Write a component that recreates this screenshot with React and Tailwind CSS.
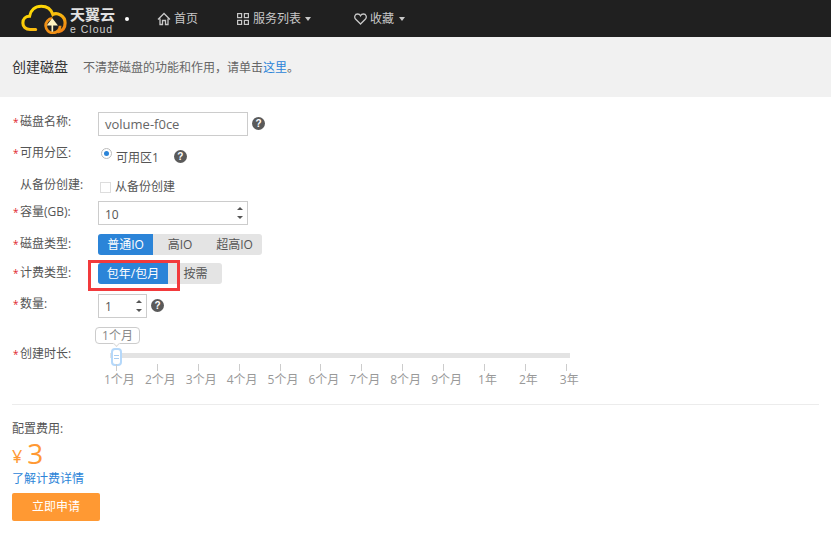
const FONT = '"Open Sans", "Noto Sans CJK SC", sans-serif';
const MONTHS = ['1个月', '2个月', '3个月', '4个月', '5个月', '6个月', '7个月', '8个月', '9个月', '1年', '2年', '3年'];

function Logo() {
    return (
        <div className="flex items-center w-[120px] ml-[21px]">
            <svg width="46" height="30" viewBox="0 0 41 27" fill="none">
                <defs>
                    <linearGradient id="cloud" x1="0" y1="0" x2="1" y2="1">
                        <stop offset="0" stopColor="#ffe600" />
                        <stop offset="0.6" stopColor="#f9b90f" />
                        <stop offset="1" stopColor="#ee7a14" />
                    </linearGradient>
                </defs>
                <path d="M13 23H8C4 23 1.500 20.500 1.500 17C1.500 13.500 4 11 7.500 11C8.500 5.500 12.500 2 18 2C23 2 27 5 28.500 9.500C30 8.500 33 8.500 35.500 10C38 11.500 39.500 14 39.500 17C39.500 21 37 24 33.500 25" stroke="url(#cloud)" strokeWidth="2.800" strokeLinecap="round" />
                <path d="M35 19.500A6.500 6.500 0 1 1 28 13" stroke="#f09016" strokeWidth="2.500" />
                <path d="M28 25V17.500M24.500 18.500L28 14L31.500 18.500Z" stroke="#fff3c0" strokeWidth="1.500" fill="#fff3c0" />
            </svg>
            <div className="ml-[3px] h-[30px] pt-[3px] flex flex-col text-[#e2e2e2]">
                <span className="text-[15px] font-bold leading-[15px]">天翼云</span>
                <span className="mt-[3px] text-[10.500px] leading-[8px] tracking-[1px] font-['Liberation_Sans'] text-[#cfcfcf]">e Cloud</span>
            </div>
            <span className="ml-[10px] w-1 h-1 rounded-full bg-white" />
        </div>
    );
}

function NavBar() {
    return (
        <div className="h-[37px] bg-[#202020] flex items-center text-xs text-[#c8c8c8]">
            <Logo />
            <div className="flex items-center ml-[16px] w-[80px]">
                <svg width="14" height="14" viewBox="0 0 14 14" fill="none" stroke="#c8c8c8" strokeWidth="1.300" className="mr-[3px]">
                    <path d="M1 7.500L7 1.500L13 7.500M3 6.500V12.500H5.500V8.500H8.500V12.500H11V6.500" />
                </svg>
                首页
            </div>
            <div className="flex items-center w-[117px]">
                <svg width="12" height="12" viewBox="0 0 12 12" fill="none" stroke="#c8c8c8" strokeWidth="1.200" className="mr-[4px]">
                    <rect x="0.600" y="0.600" width="4" height="4" />
                    <rect x="7.400" y="0.600" width="4" height="4" />
                    <rect x="0.600" y="7.400" width="4" height="4" />
                    <rect x="7.400" y="7.400" width="4" height="4" />
                </svg>
                服务列表
                <span className="ml-[4px] border-x-[3px] border-t-[4px] border-x-transparent border-t-[#c8c8c8]" />
            </div>
            <div className="flex items-center">
                <svg width="13" height="12" viewBox="0 0 13 12" fill="none" stroke="#c8c8c8" strokeWidth="1.300" className="mr-[3px]">
                    <path d="M6.500 11L1.500 6C0 4.300 0.700 1 3.600 1C5 1 6 1.800 6.500 2.800C7 1.800 8 1 9.400 1C12.300 1 13 4.300 11.500 6Z" />
                </svg>
                收藏
                <span className="ml-[5px] border-x-[3px] border-t-[4px] border-x-transparent border-t-[#c8c8c8]" />
            </div>
        </div>
    );
}

function Help({ className = '' }) {
    return (
        <span className={`inline-flex items-center justify-center w-[13px] h-[13px] rounded-full bg-[#5a5a5a] text-white text-[10px] font-bold leading-none font-['Liberation_Sans'] ${className}`}>?</span>
    );
}

function Spinner() {
    return (
        <span className="flex flex-col gap-[6px] items-center">
            <span className="border-x-[3px] border-b-[3px] border-x-transparent border-b-[#555]" />
            <span className="border-x-[3px] border-t-[3px] border-x-transparent border-t-[#555]" />
        </span>
    );
}

function Row({ label, required = true, height, top = 0, labelTop = 0, children }) {
    return (
        <div className="flex" style={{ height, marginTop: top }}>
            <div className="w-[86px] flex text-xs text-[#555] leading-[20px]" style={{ marginTop: labelTop }}>
                <span className="w-2 pl-[1px] text-[10px] text-[#e0242c]">{required ? '*' : ''}</span>
                {label}
            </div>
            <div className="flex-1 flex items-start">{children}</div>
        </div>
    );
}

function Segment({ items, active }) {
    return (
        <div className="flex h-[21px] rounded-[3px] bg-[#e4e4e4] text-xs text-[#555] leading-[21px]">
            {items.map((item) => (
                <span key={item.text} className={`${item.width} text-center ${item.text === active ? 'bg-[#2b84d8] text-white rounded-l-[3px]' : ''}`}>
                    {item.text}
                </span>
            ))}
        </div>
    );
}

function DurationSlider() {
    return (
        <div className="relative w-[490px] h-[60px]">
            <div className="absolute left-[-3px] top-0 h-[17px] w-[45px] rounded-[4px] border border-[#ccc] bg-white text-xs leading-[15px] text-[#888] text-center">
                1个月
                <span className="absolute left-[18px] bottom-[-3px] w-[5px] h-[5px] rotate-45 border-r border-b border-[#ddd] bg-white" />
            </div>
            <div className="absolute left-[12px] top-[26px] w-[460px] h-[5px] bg-[#e3e3e3]" />
            <div className="absolute left-[13px] top-[21px] w-[11px] h-[18px] rounded-[4px] border-2 border-[#b5d8fa] bg-white flex flex-col items-center justify-center gap-[2px]">
                <span className="w-[5px] h-px bg-[#a9cdf0]" />
                <span className="w-[5px] h-px bg-[#a9cdf0]" />
            </div>
            <div className="absolute left-[-2px] top-[37px] flex">
                {MONTHS.map((m) => (
                    <div key={m} className="w-[40.900px] flex flex-col items-center text-xs text-[#999] leading-[16px]">
                        <span className="w-px h-[7px] bg-[#ccc] mb-[1px]" />
                        <span className="whitespace-nowrap translate-x-[3px]">{m}</span>
                    </div>
                ))}
            </div>
        </div>
    );
}

export default function App() {
    return (
        <div className="w-[831px] h-[535px] bg-white overflow-hidden" style={{ fontFamily: FONT }}>
            <NavBar />
            <div className="h-[60px] bg-[#f1f1f1] flex items-center px-3 pb-[1px]">
                <span className="text-sm text-[#333] mr-[15px]">创建磁盘</span>
                <span className="text-xs text-[#666] mt-[2px]">
                    不清楚磁盘的功能和作用，请单击<span className="text-[#2b84d8]">这里</span>。
                </span>
            </div>
            <div className="px-3 pt-[15px]">
                <Row label="磁盘名称:" height={24}>
                    <div className="w-[150px] h-[24px] border border-[#ccc] px-[6px] text-[13px] leading-[22px] text-[#666]">volume-f0ce</div>
                    <Help className="ml-[4px] mt-[5px]" />
                </Row>
                <Row label="可用分区:" height={24} top={9} labelTop={-2}>
                    <span className="ml-[3px] mt-[3px] w-[11px] h-[11px] rounded-full border border-[#bbb] flex items-center justify-center">
                        <span className="w-[5px] h-[5px] rounded-full bg-[#2b84d8]" />
                    </span>
                    <span className="ml-[4px] mt-[3px] text-xs leading-[20px] text-[#555]">可用区1</span>
                    <Help className="ml-[15px] mt-[5px]" />
                </Row>
                <Row label="从备份创建:" required={false} height={24} top={6}>
                    <span className="ml-[2px] mt-[7px] w-[11px] h-[11px] border border-[#ddd]" />
                    <span className="ml-[4px] mt-[2px] text-xs leading-[20px] text-[#555]">从备份创建</span>
                </Row>
                <Row label="容量(GB):" height={24} top={2} labelTop={1}>
                    <div className="w-[150px] h-[24px] border border-[#ccc] pl-[6px] pr-[4px] flex items-center justify-between text-xs text-[#555]">
                        <span className="mt-[3px]">10</span>
                        <Spinner />
                    </div>
                </Row>
                <Row label="磁盘类型:" height={21} top={9}>
                    <Segment
                        active="普通IO"
                        items={[
                            { text: '普通IO', width: 'w-[55px]' },
                            { text: '高IO', width: 'w-[54px]' },
                            { text: '超高IO', width: 'w-[55px]' },
                        ]}
                    />
                </Row>
                <Row label="计费类型:" height={21} top={8}>
                    <div className="relative">
                        <Segment
                            active="包年/包月"
                            items={[
                                { text: '包年/包月', width: 'w-[70px] mr-[1px]' },
                                { text: '按需', width: 'w-[53px]' },
                            ]}
                        />
                        <div className="absolute left-[-10px] top-[-3px] w-[92px] h-[31px] border-[3px] border-[#f23a3c]" />
                    </div>
                </Row>
                <Row label="数量:" height={24} top={10}>
                    <div className="w-[49px] h-[24px] border border-[#ccc] pl-[6px] pr-[4px] flex items-center justify-between text-xs text-[#555]">
                        <span className="mt-[1px]">1</span>
                        <Spinner />
                    </div>
                    <Help className="ml-[4px] mt-[5px]" />
                </Row>
                <Row label="创建时长:" height={60} top={9} labelTop={17}>
                    <DurationSlider />
                </Row>
            </div>
            <div className="mx-3 mt-[17px] border-t border-[#ececec]" />
            <div className="px-3 pt-[15px]">
                <div className="text-xs leading-[18px] text-[#555]">配置费用:</div>
                <div className="flex items-center text-[#ff9933] h-[30px]">
                    <span className="text-lg mr-[5px] leading-[18px] mt-[6px]">¥</span>
                    <span className="text-[28px] leading-[30px]">3</span>
                </div>
                <div className="text-xs leading-[18px] text-[#2b84d8] mt-[2px]">了解计费详情</div>
                <div className="mt-[5px] w-[88px] h-[28px] rounded-[2px] bg-[#ff9933] text-white text-xs leading-[28px] text-center">立即申请</div>
            </div>
        </div>
    );
}
